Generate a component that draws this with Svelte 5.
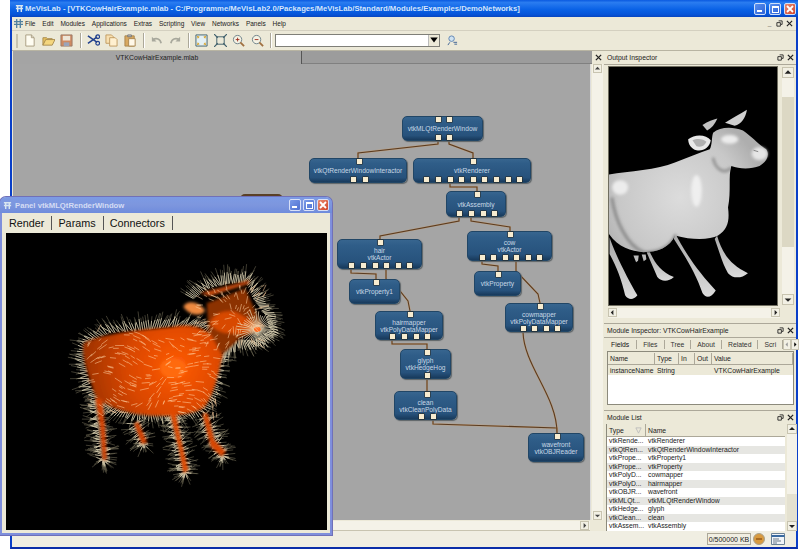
<script>
  const menus = ['File', 'Edit', 'Modules', 'Applications', 'Extras', 'Scripting', 'View', 'Networks', 'Panels', 'Help'];

  // page coordinates, the canvas origin gets subtracted when drawing
  const modules = [
    { lines: ['vtkMLQtRenderWindow'], x: 402, y: 115, w: 81, h: 25, top: [438, 449], bottom: [438, 449] },
    { lines: ['vtkQtRenderWindowInteractor'], x: 309, y: 157, w: 98, h: 25, top: [359], bottom: [353, 365] },
    { lines: ['vtkRenderer'], x: 413, y: 157, w: 118, h: 25, top: [473], bottom: [426, 438, 450, 461, 473, 484, 496, 508, 519] },
    { lines: ['vtkAssembly'], x: 446, y: 190, w: 60, h: 26, top: [477], bottom: [459, 471, 483, 494] },
    { lines: ['hair', 'vtkActor'], x: 337, y: 238, w: 85, h: 30, top: [380], bottom: [351, 363, 375, 386, 398, 409] },
    { lines: ['cow', 'vtkActor'], x: 467, y: 230, w: 85, h: 30, top: [510], bottom: [482, 493, 505, 516, 528, 539] },
    { lines: ['vtkProperty1'], x: 349, y: 278, w: 51, h: 25, top: [376], bottom: [] },
    { lines: ['vtkProperty'], x: 474, y: 270, w: 47, h: 25, top: [498], bottom: [] },
    { lines: ['hairmapper', 'vtkPolyDataMapper'], x: 375, y: 310, w: 68, h: 29, top: [410], bottom: [392, 404, 416, 427] },
    { lines: ['glyph', 'vtkHedgeHog'], x: 400, y: 348, w: 51, h: 30, top: [427], bottom: [427] },
    { lines: ['clean', 'vtkCleanPolyData'], x: 394, y: 390, w: 63, h: 29, top: [427], bottom: [421, 433] },
    { lines: ['cowmapper', 'vtkPolyDataMapper'], x: 505, y: 302, w: 68, h: 29, top: [540], bottom: [523, 534, 546, 557] },
    { lines: ['wavefront', 'vtkOBJReader'], x: 528, y: 432, w: 56, h: 29, top: [557], bottom: [] }
  ];

  const wires = [
    'M438 140V143L358 152V157',
    'M449 140V143L473 152V157',
    'M450 182V186H477V190',
    'M459 216V220L380 235V238',
    'M471 216V220L510 226V230',
    'M351 268V272L376 273V278',
    'M386 268V278L400 290L408 300L410 310',
    'M482 260V263L498 265V270',
    'M516 260V270L538 293L540 302',
    'M392 339V343H427V348',
    'M427 378V390',
    'M433 419V423L557 427V432',
    'M523 331C524 365 557 395 557 432'
  ];

  const inspectorTabs = ['Fields', 'Files', 'Tree', 'About', 'Related', 'Scri'];

  const moduleRows = [
    ['vtkRende...', 'vtkRenderer'],
    ['vtkQtRen...', 'vtkQtRenderWindowInteractor'],
    ['vtkPrope...', 'vtkProperty1'],
    ['vtkPrope...', 'vtkProperty'],
    ['vtkPolyD...', 'cowmapper'],
    ['vtkPolyD...', 'hairmapper'],
    ['vtkOBJR...', 'wavefront'],
    ['vtkMLQt...', 'vtkMLQtRenderWindow'],
    ['vtkHedge...', 'glyph'],
    ['vtkClean...', 'clean'],
    ['vtkAssem...', 'vtkAssembly']
  ];

  const cowBody = 'M20 372C80 362 170 358 225 335C265 320 300 305 330 295C338 280 335 260 340 245C360 228 395 225 430 238C455 255 480 282 500 295C510 310 505 330 480 345C455 355 420 355 395 345C385 375 395 420 385 470C390 510 385 535 355 555C330 568 280 570 225 555C210 590 175 605 130 605C90 600 50 590 20 540z';

  // fur for the hedgehog cow, seeded so every render looks the same
  let seed = 7;
  const rnd = () => {
    seed = (seed * 16807) % 2147483647;
    return seed / 2147483647;
  };

  const outline = [
    [135, 245], [200, 210], [300, 200], [400, 190], [490, 195], [520, 250], [545, 290],
    [530, 340], [520, 400], [485, 450], [400, 470], [300, 465], [200, 445], [140, 380], [125, 300], [135, 245]
  ];
  const headline = [
    [450, 110], [500, 75], [560, 60], [625, 55], [650, 110], [690, 170], [700, 215],
    [650, 250], [590, 250], [545, 290]
  ];
  const limbs = [
    [[165, 420], [190, 600]],
    [[285, 490], [310, 550]],
    [[395, 460], [435, 635]],
    [[490, 470], [545, 585]]
  ];

  const outer = [];
  const inner = [];

  function hair(px, py, a, len, back) {
    outer.push({
      x1: px - Math.cos(a) * back,
      y1: py - Math.sin(a) * back,
      x2: px + Math.cos(a) * len,
      y2: py + Math.sin(a) * len,
      mx: px + Math.cos(a) * len * 0.5,
      my: py + Math.sin(a) * len * 0.5
    });
  }

  function furAlong(points, cx, cy, step) {
    for (let i = 0; i < points.length - 1; i++) {
      const [ax, ay] = points[i];
      const [bx, by] = points[i + 1];
      const n = Math.max(2, Math.round(Math.hypot(bx - ax, by - ay) / step));
      for (let k = 0; k < n; k++) {
        const t = k / n;
        const px = ax + (bx - ax) * t;
        const py = ay + (by - ay) * t;
        hair(px, py, Math.atan2(py - cy, px - cx) + (rnd() - 0.5) * 0.6, 22 + rnd() * 26, 12);
      }
    }
  }

  furAlong(outline, 330, 330, 6.5);
  furAlong(headline, 570, 160, 5);

  for (const [[ax, ay], [bx, by]] of limbs) {
    const n = Math.round(Math.hypot(bx - ax, by - ay) / 2);
    const base = Math.atan2(by - ay, bx - ax);
    for (let k = 0; k <= n; k++) {
      const t = k / n;
      const px = ax + (bx - ax) * t;
      const py = ay + (by - ay) * t;
      const side = k % 2 ? 1 : -1;
      hair(px, py, base + side * (Math.PI / 2) + (rnd() - 0.5) * 1.1, 26 + rnd() * 28, 0);
    }
  }

  // hoof bursts at the feet, the same starburst on the muzzle
  for (const [cx, cy, count] of [[190, 600, 16], [310, 552, 10], [435, 638, 18], [548, 588, 16]]) {
    for (let i = 0; i < count; i++) {
      hair(cx, cy, Math.PI * (rnd() * 1.1 - 0.05), 20 + rnd() * 24, 0);
    }
  }

  const headBursts = [];
  for (let i = 0; i < 42; i++) {
    const a = (i / 42) * Math.PI * 2;
    const len = 14 + rnd() * 24;
    headBursts.push({ x1: 652, y1: 208, x2: 652 + Math.cos(a) * (28 + len), y2: 208 + Math.sin(a) * (28 + len) });
  }

  // inner strokes lying flat on the body, plus some on head and legs
  for (let i = 0; i < 220; i++) {
    const px = 140 + rnd() * 390;
    const py = 215 + rnd() * 245;
    const a = -0.3 + Math.sin(px / 60 + py / 90) * 0.9 + (px > 380 ? 1 : 0);
    const len = 10 + rnd() * 18;
    inner.push({ x1: px, y1: py, x2: px + Math.cos(a) * len, y2: py + Math.sin(a) * len });
  }
  for (let i = 0; i < 110; i++) {
    const px = 480 + rnd() * 190;
    const py = 75 + rnd() * 175;
    const a = Math.atan2(py - 170, px - 590) + (rnd() - 0.5);
    const len = 8 + rnd() * 20;
    inner.push({ x1: px, y1: py, x2: px + Math.cos(a) * len, y2: py + Math.sin(a) * len });
  }
</script>

<div class="app">
  <div class="window">
    <div class="titlebar">
      <svg class="app-icon" viewBox="0 0 10 10"><path d="M1 2h8M1 5h8M3 1v8M7 1v8" stroke="#d8e6f0" stroke-width="1.6" /></svg>
      <span class="title-text">MeVisLab - [VTKCowHairExample.mlab - C:/Programme/MeVisLab2.0/Packages/MeVisLab/Standard/Modules/Examples/DemoNetworks]</span>
      <div class="caption-btns">
        <span class="cap"><i class="min"></i></span>
        <span class="cap"><i class="max"></i></span>
        <span class="cap close"><svg viewBox="0 0 10 10"><path d="M2 2l6 6M8 2l-6 6" stroke="#fff" stroke-width="1.8" /></svg></span>
      </div>
    </div>

    <div class="menubar">
      <svg class="menu-icon" viewBox="0 0 10 10"><path d="M0 3h10M0 6h10M3 0v10M7 0v10" stroke="#4f7f9f" stroke-width="1.4" /></svg>
      {#each menus as m}
        <span class="menu-item">{m}</span>
      {/each}
      <div class="mdi-btns">
        <span>_</span>
        <svg viewBox="0 0 8 8"><path d="M3 1h4v4H5.500M1 3h4v4H1z" fill="none" stroke="#222" /></svg>
        <svg viewBox="0 0 8 8"><path d="M1 1l6 6M7 1L1 7" stroke="#222" stroke-width="1.3" /></svg>
      </div>
    </div>

    <div class="toolbar">
      <span class="grip"></span>
      <svg class="tool" viewBox="0 0 14 14"><path d="M3 1h6l3 3v9H3z" fill="#fffdf2" stroke="#a89c80" /><path d="M9 1v3h3" fill="none" stroke="#a89c80" /></svg>
      <svg class="tool" viewBox="0 0 14 14"><path d="M1 4h4l1 1h5v2H4L1 12z" fill="#e8c25e" stroke="#a88a50" /><path d="M1 12l3-6h10l-3 6z" fill="#f4d67e" stroke="#a88a50" /></svg>
      <svg class="tool" viewBox="0 0 14 14"><path d="M1 1h12v12H1z" fill="#cf8a62" stroke="#9a7a68" /><path d="M3 2h8v5H3z" fill="#eee6d8" /><path d="M4 9h6v4H4z" fill="#9aa4ba" /></svg>
      <span class="sep"></span>
      <svg class="tool" viewBox="0 0 14 14"><path d="M1 2l10 7M1 10l10-7" stroke="#22418e" stroke-width="1.6" fill="none" /><circle cx="11.500" cy="3" r="2" fill="none" stroke="#22418e" stroke-width="1.300" /><circle cx="11.500" cy="10" r="2" fill="none" stroke="#22418e" stroke-width="1.300" /></svg>
      <svg class="tool" viewBox="0 0 14 14"><path d="M1 1h6l2 2v7H1z" fill="#f8e0b0" stroke="#c09a60" /><path d="M5 4h6l2 2v7H5z" fill="#fff0d0" stroke="#c09a60" /></svg>
      <svg class="tool" viewBox="0 0 14 14"><path d="M1 2h10v11H1z" fill="#d8a860" stroke="#a8844c" /><path d="M4 1h4v2H4z" fill="#c4c4c4" stroke="#777" /><path d="M5 5h7v8H5z" fill="#fff8e8" stroke="#a8844c" /></svg>
      <span class="sep"></span>
      <svg class="tool" viewBox="0 0 14 14"><path d="M12 10C11 5 7 4 3 6" fill="none" stroke="#a8a89c" stroke-width="1.800" /><path d="M2 3v5h5z" fill="#a8a89c" /></svg>
      <svg class="tool" viewBox="0 0 14 14"><path d="M2 10C3 5 7 4 11 6" fill="none" stroke="#a8a89c" stroke-width="1.800" /><path d="M12 3v5H7z" fill="#a8a89c" /></svg>
      <span class="sep"></span>
      <svg class="tool" viewBox="0 0 14 14"><path d="M1 1h12v12H1z" fill="#e4f0f4" stroke="#40606c" /><path d="M2 2l3 1-2 2zM12 2l-3 1 2 2zM2 12l3-1-2-2zM12 12l-3-1 2-2z" fill="#d8a020" /></svg>
      <svg class="tool" viewBox="0 0 14 14"><path d="M3 3h8v8H3z" fill="none" stroke="#40606c" /><path d="M0 0l4 4M14 0l-4 4M0 14l4-4M14 14l-4-4" stroke="#40606c" stroke-width="1.300" /></svg>
      <svg class="tool" viewBox="0 0 14 14"><circle cx="6" cy="6" r="4.500" fill="#f4f2e4" stroke="#6b7f88" /><path d="M4 6h4M6 4v4" stroke="#a03020" /><path d="M9 9l4 4" stroke="#a07040" stroke-width="2" /></svg>
      <svg class="tool" viewBox="0 0 14 14"><circle cx="6" cy="6" r="4.500" fill="#f4f2e4" stroke="#6b7f88" /><path d="M4 6h4" stroke="#a03020" /><path d="M9 9l4 4" stroke="#a07040" stroke-width="2" /></svg>
      <span class="sep last-sep"></span>
      <div class="combo"><span class="combo-arrow"><svg viewBox="0 0 8 8"><path d="M1 2h6L4 6z" fill="#000" /></svg></span></div>
      <svg class="tool search" viewBox="0 0 12 12"><circle cx="5" cy="4" r="3" fill="#cfe2f0" stroke="#5a80b0" /><path d="M3 8l-2 3M7 8h4M8 10h3" stroke="#3a5f90" /></svg>
    </div>

    <div class="main">
      <div class="doc">
        <div class="doc-head">
          <div class="doc-tab">VTKCowHairExample.mlab</div>
          <div class="doc-rest"></div>
          <svg class="doc-close" viewBox="0 0 8 8"><path d="M1 1l6 6M7 1L1 7" stroke="#222" stroke-width="1.500" /></svg>
        </div>
        <div class="doc-body">
          <div class="canvas">
            <div class="hidden-module"></div>
            <svg class="wires" viewBox="13 63 577 456" width="577" height="456">
              {#each wires as d}
                <path {d} class="wire-edge" />
                <path {d} class="wire" />
              {/each}
            </svg>
            {#each modules as mod}
              <div class="module" style="left: {mod.x - 13}px; top: {mod.y - 63}px; width: {mod.w}px; height: {mod.h}px">
                <div class="module-label">
                  {#each mod.lines as line}
                    <div>{line}</div>
                  {/each}
                </div>
                {#each mod.top as px}
                  <span class="port port-top" style="left: {px - mod.x - 3}px"></span>
                {/each}
                {#each mod.bottom as px}
                  <span class="port port-bottom" style="left: {px - mod.x - 3}px"></span>
                {/each}
              </div>
            {/each}
          </div>
          <div class="vscroll doc-v">
            <span class="arrow"><svg viewBox="0 0 8 8"><path d="M1 5h6L4 2z" fill="#444" /></svg></span>
            <span class="thumb"></span>
            <span class="arrow"><svg viewBox="0 0 8 8"><path d="M1 3h6L4 6z" fill="#444" /></svg></span>
          </div>
        </div>
        <div class="hscroll doc-h">
          <span class="thumb"></span>
          <span class="arrow"><svg viewBox="0 0 8 8"><path d="M3 1v6l3-3z" fill="#444" /></svg></span>
        </div>
      </div>

      <div class="side">
        <section class="dock output">
          <div class="dock-head">
            <span>Output Inspector</span>
            <svg viewBox="0 0 8 8"><path d="M3 1h4v4H5.500M1 3h4v4H1z" fill="none" stroke="#222" /></svg>
            <svg viewBox="0 0 8 8"><path d="M1 1l6 6M7 1L1 7" stroke="#222" stroke-width="1.500" /></svg>
          </div>
          <div class="output-body">
            <div class="viewer">
              <svg viewBox="27 47 505 717" width="168" height="238">
                <defs>
                  <radialGradient id="cowskin" gradientUnits="userSpaceOnUse" cx="240" cy="440" r="260">
                    <stop offset="0" stop-color="#dcdcdc" />
                    <stop offset="0.7" stop-color="#c8c8c8" />
                    <stop offset="1" stop-color="#aeaeae" />
                  </radialGradient>
                  <linearGradient id="legskin" x1="0" y1="0" x2="0" y2="1">
                    <stop offset="0" stop-color="#a8a8a8" />
                    <stop offset="1" stop-color="#dcdcdc" />
                  </linearGradient>
                  <filter id="soft2" x="-30%" y="-30%" width="160%" height="160%"><feGaussianBlur stdDeviation="5" /></filter>
                  <clipPath id="cowclip"><path d={cowBody} /></clipPath>
                </defs>
                <path d="M352 555C365 600 385 640 445 668C425 685 400 685 385 668C368 640 358 600 345 565z" fill="url(#legskin)" />
                <path d="M150 605C165 640 185 665 222 680C205 695 185 695 172 680C160 650 150 630 140 605z" fill="url(#legskin)" />
                <path d="M100 615l8 20 6-4 2-16zM125 612l6 20 8-6-2-14z" fill="#bbb" />
                <path d="M28 560C40 600 85 690 112 735C100 750 85 750 75 735C65 690 50 650 28 610z" fill="url(#legskin)" />
                <path d="M225 545C250 600 300 670 348 720C335 742 318 745 308 728C285 660 250 610 222 565z" fill="url(#legskin)" />
                <path d={cowBody} fill="url(#cowskin)" />
                <g clip-path="url(#cowclip)">
                  <path d="M35 440C45 510 80 585 130 605C180 610 215 585 228 552" fill="none" stroke="#8a8a8a" stroke-width="9" filter="url(#soft2)" />
                  <path d="M340 320C345 350 370 375 395 350" fill="none" stroke="#8e8e8e" stroke-width="8" filter="url(#soft2)" />
                  <ellipse cx="290" cy="420" rx="16" ry="48" fill="#efefef" filter="url(#soft2)" />
                  <ellipse cx="60" cy="410" rx="24" ry="22" fill="#ececec" filter="url(#soft2)" />
                  <ellipse cx="390" cy="265" rx="26" ry="13" fill="#ececec" filter="url(#soft2)" />
                </g>
                <ellipse cx="480" cy="308" rx="24" ry="20" fill="#e6e6e6" filter="url(#soft2)" />
                <path d="M462 298l14 4" stroke="#555" stroke-width="2" />
                <path d="M376 215C400 200 420 190 442 176C438 200 425 220 405 224z" fill="#d0d0d0" />
                <path d="M308 222C325 210 340 205 353 202C345 220 335 232 322 238z" fill="#c2c2c2" />
                <path d="M265 265C285 248 320 250 333 268C330 290 310 302 290 298C275 295 265 280 265 265z" fill="#e8e8e8" />
                <path d="M278 268C292 260 312 264 320 272C314 286 300 290 290 286z" fill="#b0b0b0" />
              </svg>
            </div>
            <div class="vscroll out-v">
              <span class="arrow"><svg viewBox="0 0 8 8"><path d="M1 5h6L4 2z" fill="#222" /></svg></span>
              <span class="thumb"></span>
              <span class="arrow"><svg viewBox="0 0 8 8"><path d="M1 3h6L4 6z" fill="#222" /></svg></span>
            </div>
          </div>
          <div class="hscroll out-h">
            <span class="arrow"><svg viewBox="0 0 8 8"><path d="M5 1v6L2 4z" fill="#222" /></svg></span>
            <span class="thumb"></span>
            <span class="arrow"><svg viewBox="0 0 8 8"><path d="M3 1v6l3-3z" fill="#222" /></svg></span>
          </div>
        </section>

        <section class="dock inspector">
          <div class="dock-head">
            <span>Module Inspector: VTKCowHairExample</span>
            <svg viewBox="0 0 8 8"><path d="M3 1h4v4H5.500M1 3h4v4H1z" fill="none" stroke="#222" /></svg>
            <svg viewBox="0 0 8 8"><path d="M1 1l6 6M7 1L1 7" stroke="#222" stroke-width="1.500" /></svg>
          </div>
          <div class="tabs">
            {#each inspectorTabs as tab, i}
              <span class="tab" class:active={i === 0}>{tab}</span>
            {/each}
            <span class="tab-arrow"><svg viewBox="0 0 8 8"><path d="M5 1v6L2 4z" fill="#999" /></svg></span>
            <span class="tab-arrow"><svg viewBox="0 0 8 8"><path d="M3 1v6l3-3z" fill="#000" /></svg></span>
          </div>
          <div class="fields">
            <div class="fields-head">
              <span class="c-name">Name</span>
              <span class="c-type">Type</span>
              <span class="c-in">In</span>
              <span class="c-out">Out</span>
              <span class="c-value">Value</span>
            </div>
            <div class="fields-row">
              <span class="c-name">instanceName</span>
              <span class="c-type">String</span>
              <span class="c-in"></span>
              <span class="c-out"></span>
              <span class="c-value">VTKCowHairExample</span>
            </div>
          </div>
        </section>

        <section class="dock modlist">
          <div class="dock-head">
            <span>Module List</span>
            <svg viewBox="0 0 8 8"><path d="M3 1h4v4H5.500M1 3h4v4H1z" fill="none" stroke="#222" /></svg>
            <svg viewBox="0 0 8 8"><path d="M1 1l6 6M7 1L1 7" stroke="#222" stroke-width="1.500" /></svg>
          </div>
          <div class="list-wrap">
            <div class="list">
              <div class="list-head">
                <span class="l-type">Type <svg viewBox="0 0 8 8"><path d="M1 1h6L4 7z" fill="none" stroke="#bbb" /></svg></span>
                <span class="l-name">Name</span>
              </div>
              {#each moduleRows as row}
                <div class="list-row">
                  <span class="l-type">{row[0]}</span>
                  <span class="l-name">{row[1]}</span>
                </div>
              {/each}
            </div>
            <div class="vscroll list-v">
              <span class="arrow"><svg viewBox="0 0 8 8"><path d="M1 5h6L4 2z" fill="#222" /></svg></span>
              <span class="thumb"></span>
              <span class="arrow"><svg viewBox="0 0 8 8"><path d="M1 3h6L4 6z" fill="#222" /></svg></span>
            </div>
          </div>
        </section>
      </div>
    </div>

    <div class="statusbar">
      <span class="mem">0/500000 KB</span>
      <svg class="stop" viewBox="0 0 12 12"><circle cx="6" cy="6" r="5.500" fill="#d89a40" stroke="#a9a08a" /><path d="M3 6h6" stroke="#a86a20" stroke-width="2" /></svg>
      <svg class="console" viewBox="0 0 14 12"><path d="M0.500 0.500h13v11h-13z" fill="#f0f4f8" stroke="#6b8296" /><path d="M0.500 3h13" stroke="#3a6aa0" stroke-width="2" /><path d="M2 6h6M2 8h8M2 10h4" stroke="#6a7a8a" /></svg>
    </div>
  </div>

  <div class="panel">
    <div class="panel-title">
      <svg class="panel-icon" viewBox="0 0 10 10"><path d="M1 2h8M1 5h8M3 1v8M7 1v8" stroke="#d8e6f0" stroke-width="1.600" /></svg>
      <span class="panel-text">Panel vtkMLQtRenderWindow</span>
      <div class="panel-btns">
        <span class="pcap"><i class="min"></i></span>
        <span class="pcap"><i class="max"></i></span>
        <span class="pcap close"><svg viewBox="0 0 10 10"><path d="M2 2l6 6M8 2l-6 6" stroke="#fff" stroke-width="1.800" /></svg></span>
      </div>
    </div>
    <div class="panel-tabs">
      <span class="ptab">Render</span>
      <span class="ptab">Params</span>
      <span class="ptab">Connectors</span>
    </div>
    <div class="render-view">
      <svg viewBox="-102 -81 963 891" width="321" height="297">
        <defs>
          <radialGradient id="furbody" gradientUnits="userSpaceOnUse" cx="410" cy="320" r="300">
            <stop offset="0" stop-color="#ff5a08" />
            <stop offset="0.5" stop-color="#d84600" />
            <stop offset="1" stop-color="#963002" />
          </radialGradient>
          <filter id="furblur" x="-20%" y="-20%" width="140%" height="140%"><feGaussianBlur stdDeviation="4" /></filter>
        </defs>
        {#each outer as h}
          <line x1={h.x1} y1={h.y1} x2={h.x2} y2={h.y2} class="hair-tip" />
          <line x1={h.x1} y1={h.y1} x2={h.mx} y2={h.my} class="hair-root" />
        {/each}
        <g filter="url(#furblur)">
          <path d="M130 250C180 220 300 210 400 200C450 190 490 200 520 230L548 285C535 330 528 400 490 445C440 470 360 472 290 462C230 450 180 432 162 398C148 350 124 300 130 250z" fill="url(#furbody)" />
          <path d="M165 410L180 500L188 600L200 600L195 500L187 420z" fill="#d24000" />
          <path d="M282 490L305 552L322 548L295 485z" fill="#d24000" />
          <path d="M388 450L417 570L430 640L445 630L423 540L405 450z" fill="#e04800" />
          <path d="M487 460L512 560L545 590L558 575L523 540L503 460z" fill="#d84400" />
          <path d="M500 130L615 85L670 205L600 235L545 285L505 210z" fill="#8c3004" />
          <path d="M510 190C520 160 560 145 595 160C620 175 650 190 665 208C645 222 600 224 570 220C545 220 520 210 510 190z" fill="#d84800" />
          <path d="M430 140C445 115 480 130 495 150C490 170 450 170 430 140z" fill="#f08a40" />
          <path d="M480 100L630 60L625 72L510 108z" fill="#c84c10" />
        </g>
        <ellipse cx="400" cy="325" rx="40" ry="30" fill="#ff6a10" filter="url(#furblur)" />
        {#each headBursts as h}
          <line x1={h.x1} y1={h.y1} x2={h.x2} y2={h.y2} class="hair-root" />
        {/each}
        <ellipse cx="652" cy="208" rx="10" ry="8" fill="#ff6a20" />
        {#each inner as h}
          <line x1={h.x1} y1={h.y1} x2={h.x2} y2={h.y2} class="hair-in" />
        {/each}
      </svg>
    </div>
  </div>
</div>

<style>
  :global(body) {
    margin: 0;
    background: #fff;
  }

  .app {
    position: relative;
    width: 800px;
    height: 549px;
    overflow: hidden;
    font-family: "Liberation Sans", Arial, sans-serif;
    font-size: 7px;
    color: #222;
    background: #fff;
  }

  .window {
    display: flex;
    flex-direction: column;
    box-sizing: border-box;
    margin-left: 10px;
    width: 788px;
    height: 549px;
    background: #ece9d8;
    border-left: 2px solid #0a3fc8;
    border-right: 2px solid #0a3fc8;
    border-bottom: 3px solid #0a2ea8;
  }

  /* Title bar */
  .titlebar {
    display: flex;
    align-items: center;
    height: 17px;
    margin: 0 -2px;
    padding: 0 2px 0 3px;
    flex: none;
    background: linear-gradient(#0a5ae0, #2a7cf0 15%, #0a62e6 55%, #0654d8 85%, #0846c0);
  }

  .app-icon {
    width: 9px;
    height: 9px;
    margin: 0 1px 0 2px;
  }

  .title-text {
    color: #d6e6fb;
    font-weight: 700;
    font-size: 7.7px;
    white-space: nowrap;
  }

  .caption-btns {
    display: flex;
    gap: 3px;
    margin-left: auto;
  }

  .cap {
    position: relative;
    display: block;
    width: 12px;
    height: 12px;
    border: 1px solid #cfe0fa;
    border-radius: 2px;
    box-sizing: border-box;
    background: linear-gradient(135deg, #5a90ee, #2c62d8);
  }

  .cap.close,
  .pcap.close {
    background: linear-gradient(135deg, #ea8a70, #d0452a);
  }

  .cap svg,
  .pcap svg {
    display: block;
    width: 100%;
    height: 100%;
  }

  .cap .min,
  .pcap .min {
    position: absolute;
    left: 2px;
    bottom: 2px;
    width: 5px;
    height: 2px;
    background: #fff;
  }

  .cap .max,
  .pcap .max {
    position: absolute;
    left: 2px;
    top: 2px;
    width: 5px;
    height: 4px;
    border: 1px solid #fff;
    border-top-width: 2px;
  }

  /* Menu */
  .menubar {
    display: flex;
    align-items: center;
    height: 13px;
    flex: none;
    font-size: 6.5px;
    border-bottom: 1px solid #d4d0c0;
  }

  .menu-icon {
    width: 9px;
    height: 9px;
    margin: 0 2px 0 2px;
    flex: none;
  }

  .menu-item {
    margin-right: 6.85px;
    white-space: nowrap;
  }

  .mdi-btns {
    display: flex;
    align-items: center;
    gap: 3px;
    margin-left: auto;
    margin-right: 3px;
    font-weight: 700;
  }

  .mdi-btns span {
    width: 7px;
    text-align: center;
  }

  .mdi-btns svg {
    width: 7px;
    height: 7px;
  }

  /* Toolbar */
  .toolbar {
    display: flex;
    align-items: center;
    height: 19px;
    flex: none;
    padding-left: 4px;
    border-bottom: 1px solid #b8b4a2;
  }

  .grip {
    width: 2px;
    height: 14px;
    margin-right: 5px;
    background: #c8c4b0;
  }

  .tool {
    width: 13px;
    height: 13px;
    flex: none;
    margin-right: 5.5px;
  }

  .sep {
    width: 1px;
    height: 15px;
    flex: none;
    margin: 0 6px 0 1px;
    background: #aca899;
    box-shadow: 1px 0 0 #fff;
  }

  .last-sep {
    margin-right: 3.5px;
  }

  .combo {
    position: relative;
    width: 163px;
    height: 11px;
    flex: none;
    background: #fff;
    border: 1px solid #7f7f78;
  }

  .combo-arrow {
    position: absolute;
    top: 0;
    right: 0;
    width: 10px;
    height: 11px;
    background: #ece9d8;
    border-left: 1px solid #bbb;
  }

  .combo-arrow svg {
    display: block;
    width: 10px;
    height: 10px;
  }

  .search {
    width: 11px;
    height: 11px;
    margin-left: 7px;
  }

  /* Main area */
  .main {
    display: flex;
    height: 480px;
    flex: none;
  }

  .doc {
    display: flex;
    flex-direction: column;
    width: 591px;
    flex: none;
    margin-left: 1px;
  }

  .doc-head {
    display: flex;
    align-items: stretch;
    height: 13px;
    flex: none;
  }

  .doc-tab {
    width: 289px;
    flex: none;
    text-align: center;
    line-height: 13px;
    font-size: 6.8px;
    background: #a4a4a4;
    border-right: 1px solid #555;
    box-sizing: border-box;
  }

  .doc-rest {
    flex: 1;
    background: #9c9c9c;
    border-bottom: 1px solid #808080;
  }

  .doc-close {
    width: 7px;
    height: 7px;
    margin: 3px 2px 0 3px;
    flex: none;
  }

  .doc-body {
    display: flex;
    height: 456px;
    flex: none;
  }

  .canvas {
    position: relative;
    width: 577px;
    height: 456px;
    flex: none;
    background: #a5a5a5;
    border-right: 1px solid #ddd;
  }

  .wires {
    position: absolute;
    left: 0;
    top: 0;
  }

  .wire-edge {
    fill: none;
    stroke: #c4a078;
    stroke-width: 2;
    opacity: 0.7;
  }

  .wire {
    fill: none;
    stroke: #5a3b20;
    stroke-width: 1.1;
  }

  .hidden-module {
    position: absolute;
    left: 227px;
    top: 130px;
    width: 43px;
    height: 8px;
    border-radius: 5px 5px 0 0;
    background: #5a4026;
  }

  .module {
    position: absolute;
    box-sizing: border-box;
    display: flex;
    align-items: center;
    justify-content: center;
    border-radius: 5px;
    background: linear-gradient(#37658f, #2f5d88 20%, #27527c 80%, #183a5c);
    border: 1px solid #214666;
    box-shadow: 1px 1px 1px #5e6468;
  }

  .module-label {
    color: #c8d8e6;
    font-size: 6.6px;
    line-height: 7px;
    text-align: center;
    white-space: nowrap;
  }

  .port {
    position: absolute;
    width: 5px;
    height: 5px;
    background: #f7ecd0;
    box-shadow: 0 0 0 0.5px #2a2418;
  }

  .port-top {
    top: 0;
  }

  .port-bottom {
    bottom: 0;
  }

  /* Scrollbars */
  .vscroll {
    display: flex;
    flex-direction: column;
    justify-content: space-between;
    box-sizing: border-box;
    flex: none;
  }

  .hscroll {
    display: flex;
    justify-content: space-between;
    align-items: stretch;
    box-sizing: border-box;
    flex: none;
  }

  .arrow {
    display: block;
    width: 9px;
    height: 9px;
    flex: none;
    background: #f2f0e4;
    border: 1px solid #c8c4b0;
    box-sizing: border-box;
  }

  .arrow svg {
    display: block;
    width: 100%;
    height: 100%;
  }

  .thumb {
    flex: 1;
  }

  .doc-v {
    width: 11px;
    margin-left: 1px;
    padding-left: 1px;
    background: #f4f2e8;
  }

  .doc-h {
    height: 10px;
    margin-top: 1px;
    width: 577px;
    background: #f4f2e8;
    padding-right: 1px;
    border-bottom: 1px solid #c8c4b0;
  }

  /* Right column */
  .side {
    display: flex;
    flex-direction: column;
    width: 192px;
    flex: none;
  }

  .dock {
    display: flex;
    flex-direction: column;
    flex: none;
  }

  .dock-head {
    display: flex;
    align-items: center;
    gap: 3px;
    height: 14px;
    flex: none;
    padding: 0 2px 0 3px;
    font-size: 6.8px;
    border-bottom: 1px solid #aca899;
    box-sizing: border-box;
  }

  .dock-head span {
    margin-right: auto;
  }

  .dock-head svg {
    width: 7px;
    height: 7px;
  }

  .output {
    height: 272px;
  }

  .output-body {
    display: flex;
    height: 240px;
    padding: 2px 0 0 5px;
    flex: none;
  }

  .viewer {
    width: 168px;
    height: 238px;
    flex: none;
    background: #000;
    overflow: hidden;
    outline: 1px solid #706e60;
  }

  .viewer svg {
    display: block;
  }

  .out-v {
    width: 12px;
    height: 238px;
    margin-left: 5px;
    background: linear-gradient(#f4f2e8 0 30px, #dcd8c4 30px 180px, #f4f2e8 180px);
  }

  .out-v .arrow {
    width: 12px;
    height: 11px;
  }

  .out-h {
    height: 10px;
    margin: 1px 16px 0 4px;
    background: #f4f2e8;
  }

  .inspector {
    height: 84px;
    border-top: 1px solid #aca899;
  }

  .tabs {
    display: flex;
    align-items: center;
    height: 12px;
    flex: none;
    margin-left: 3px;
    font-size: 6.8px;
  }

  .tab {
    padding: 0 6px;
    border-right: 1px solid #aca899;
    line-height: 9px;
    color: #333;
    white-space: nowrap;
  }

  .tab.active {
    padding: 0 7px 0 4px;
    color: #111;
  }

  .tab-arrow {
    width: 8px;
    height: 11px;
    flex: none;
    background: #f2f0e4;
    border: 1px solid #c8c4b0;
    box-sizing: border-box;
  }

  .tab-arrow:nth-last-child(2) {
    margin-left: auto;
  }

  .tab-arrow:last-child {
    margin-right: 2px;
  }

  .tab-arrow svg {
    display: block;
    width: 100%;
    height: 100%;
  }

  .fields {
    height: 54px;
    margin: 1px 2px 0 3px;
    background: #fff;
    border: 1px solid #8c8a7c;
    box-sizing: border-box;
    font-size: 6.8px;
  }

  .fields-head,
  .fields-row {
    display: flex;
  }

  .fields-head {
    height: 12px;
    align-items: center;
    background: #ece9d8;
    border-bottom: 1px solid #aca899;
  }

  .fields-head span {
    border-right: 1px solid #aca899;
    line-height: 11px;
  }

  .fields-row {
    height: 10px;
    align-items: center;
    background: #ece9d8;
  }

  .c-name {
    width: 47px;
    padding-left: 2px;
    box-sizing: border-box;
    flex: none;
    white-space: nowrap;
  }

  .c-type {
    width: 24px;
    padding-left: 2px;
    box-sizing: border-box;
    flex: none;
  }

  .c-in {
    width: 16px;
    padding-left: 2px;
    box-sizing: border-box;
    flex: none;
  }

  .c-out {
    width: 17px;
    padding-left: 2px;
    box-sizing: border-box;
    flex: none;
  }

  .c-value {
    flex: 1;
    padding-left: 2px;
  }

  .modlist {
    height: 121px;
    margin-top: 2px;
    border-top: 1px solid #aca899;
  }

  .modlist .dock-head {
    height: 13px;
    border-bottom: none;
  }

  .list-wrap {
    display: flex;
    height: 107px;
    margin-left: 2px;
  }

  .list {
    width: 178px;
    flex: none;
    background: #fff;
    border-left: 1px solid #8c8a7c;
    font-size: 6.8px;
    overflow: hidden;
  }

  .list-head {
    display: flex;
    align-items: center;
    height: 13px;
    box-sizing: border-box;
    background: #ece9d8;
    border-bottom: 1px solid #aca899;
  }

  .list-head .l-type {
    display: flex;
    align-items: center;
    justify-content: space-between;
    padding-right: 3px;
    border-right: 1px solid #aca899;
    height: 12px;
  }

  .list-head svg {
    width: 7px;
    height: 7px;
  }

  .list-row {
    display: flex;
    align-items: center;
    height: 8.500px;
    line-height: 8.500px;
    white-space: nowrap;
  }

  .list-row:nth-child(odd) {
    background: #e6e6e2;
  }

  .l-type {
    width: 39px;
    padding-left: 2px;
    box-sizing: border-box;
    flex: none;
    overflow: hidden;
  }

  .l-name {
    padding-left: 2px;
  }

  .list-v {
    width: 10px;
    margin-left: 2px;
    background: linear-gradient(#f4f2e8 0 70px, #e4e1d0 70px);
  }

  .list-v .arrow {
    width: 10px;
    height: 10px;
  }

  /* Status bar */
  .statusbar {
    display: flex;
    align-items: center;
    justify-content: flex-end;
    height: 16px;
    flex: none;
    padding-right: 11px;
    background: #f0eee2;
  }

  .mem {
    width: 44px;
    height: 12px;
    line-height: 12px;
    text-align: center;
    font-size: 7px;
    border: 1px solid #aca899;
    box-sizing: border-box;
  }

  .stop {
    width: 12px;
    height: 12px;
    margin: 0 6px 0 2px;
  }

  .console {
    width: 14px;
    height: 12px;
  }

  /* Floating panel window */
  .panel {
    position: absolute;
    left: 0;
    top: 197px;
    display: flex;
    flex-direction: column;
    box-sizing: border-box;
    width: 332px;
    height: 338px;
    background: #ece9d8;
    border: 2px solid #7f8fdc;
    border-top: none;
    border-radius: 6px 6px 0 0;
    box-shadow: 0 0 0 1px #7070b8;
  }

  .panel-title {
    display: flex;
    align-items: center;
    height: 16px;
    flex: none;
    margin: 0 -2px;
    padding: 0 3px;
    border-radius: 6px 6px 0 0;
    background: linear-gradient(#7c9ae4, #7d96de 50%, #6f8cdc);
  }

  .panel-icon {
    width: 9px;
    height: 9px;
    margin-right: 3px;
  }

  .panel-text {
    color: #d4dcf4;
    font-size: 7.7px;
    font-weight: 700;
  }

  .panel-btns {
    display: flex;
    gap: 2px;
    margin-left: auto;
  }

  .pcap {
    position: relative;
    display: block;
    width: 12px;
    height: 12px;
    border: 1px solid #d8e0f8;
    border-radius: 2px;
    box-sizing: border-box;
    background: linear-gradient(135deg, #7a9ae8, #4f70d0);
  }

  .panel-tabs {
    display: flex;
    align-items: center;
    height: 20px;
    flex: none;
    font-size: 10.8px;
    color: #111;
  }

  .ptab {
    padding: 0 7px 0 6px;
    line-height: 14px;
    border-right: 1px solid #555;
  }

  .ptab:first-child {
    padding-left: 7px;
  }

  .render-view {
    width: 321px;
    height: 297px;
    margin-left: 4px;
    background: #000;
    overflow: hidden;
    flex: none;
  }

  .render-view svg {
    display: block;
  }

  .hair-tip {
    stroke: #77725a;
    stroke-width: 1.600;
  }

  .hair-root {
    stroke: #e6dcbc;
    stroke-width: 2.400;
    opacity: 0.9;
  }

  .hair-in {
    stroke: #ffd0a0;
    stroke-width: 2.200;
    opacity: 0.75;
  }
</style>
